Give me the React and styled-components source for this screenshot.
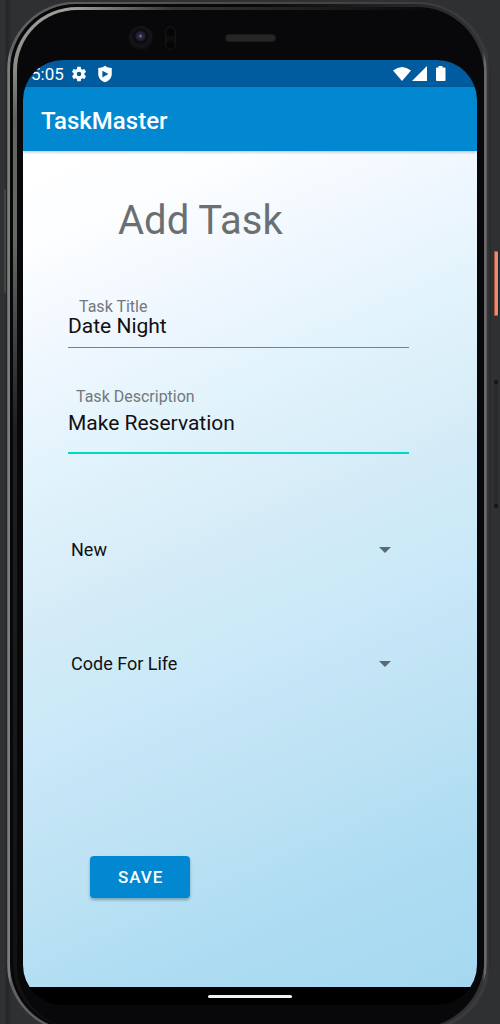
import React from "react";
import styled, { createGlobalStyle } from "styled-components";

const GlobalStyle = createGlobalStyle`
  * { box-sizing: border-box; }
  body { margin: 0; background: #2e3032; font-family: Roboto, "Liberation Sans", sans-serif; }
`;

const Stage = styled.div`
  position: relative;
  display: flex;
  min-height: 100vh;
  padding: 2px 9px 0 7px;
  overflow: clip;
  background: linear-gradient(90deg, #2e3032 0, #303233 4px, #252627 7px, #2e3032 12px);
`;

const Phone = styled.div`
  flex: 1;
  display: flex;
  margin-bottom: -8px;
  padding: 2px 4px 2px 3px;
  border-radius: 68px 74px 72px 68px;
  background: linear-gradient(90deg, #5c5d5f 0, #85878a 2px, #606164 4px, #4a4a4b 50%, #38393a calc(100% - 4px), #27282a 100%);
`;

const Rim = styled.div`
  flex: 1;
  display: flex;
  padding: 3px 3px 2px;
  border-radius: 66px 70px 70px 66px;
  background: linear-gradient(90deg, #080808 0, #080808 50%, #333334 calc(100% - 4px), #777778 calc(100% - 2px), #4a4a4b 100%);
`;

const Edge = styled.div`
  flex: 1;
  display: flex;
  padding: 3px 0 0 4px;
  border-radius: 64px 67px 68px 64px;
  background:
    linear-gradient(90deg, transparent 60px, rgba(8, 8, 10, 0.7) 160px, #08080a 90%),
    linear-gradient(180deg, #a0a09d 0, #8a8a87 60px, #62625f 110px, #686865 230px, #202020 420px, #111 100%);
`;

const Bezel = styled.div`
  flex: 1;
  display: flex;
  flex-direction: column;
  padding: 0 7px 23px 6px;
  border-radius: 60px 66px 68px 62px;
  background: #08080a;
`;

const Forehead = styled.div`
  display: flex;
  align-items: center;
  height: 50px;
  padding: 6px 0 0 106px;
`;

const Camera = styled.span`
  width: 24px;
  height: 24px;
  border-radius: 50%;
  background: radial-gradient(circle at 48% 42%, #8a8ca0 0, #28293c 2px, #20213a 4px, #0a0a0d 6px, #111113 8px, #161617 11px, #0e0e0f 12px);
`;

const Sensor = styled.span`
  width: 11px;
  height: 24px;
  margin-left: 12px;
  border: 1px solid #151516;
  border-radius: 6px;
  background:
    radial-gradient(circle at 50% 5px, #050506 0, #050506 3px, transparent 5px),
    radial-gradient(circle at 50% 18px, #050506 0, #050506 3px, #0d0d0e 5px);
`;

const Speaker = styled.span`
  width: 51px;
  height: 8px;
  margin-left: 49px;
  border: 1px solid #1a1a1b;
  border-radius: 4px;
  background: #262627;
`;

const Screen = styled.div`
  flex: 1;
  display: flex;
  flex-direction: column;
  border-radius: 40px;
  overflow: hidden;
  background: #000;
`;

const StatusBar = styled.div`
  display: flex;
  align-items: center;
  height: 27px;
  padding: 1px 31px 0 8px;
  background: #005b9f;
  color: #fff;
  font-size: 17px;
  line-height: 20px;
  svg { display: block; fill: currentColor; }
`;

const StatusGroup = styled.div`
  display: flex;
  align-items: center;
  gap: ${(p) => p.$gap}px;
  margin-left: ${(p) => (p.$end ? "auto" : "6px")};
`;

const AppBar = styled.header`
  position: relative;
  display: flex;
  align-items: center;
  height: 64px;
  padding: 3px 18px 0;
  background: #0288d1;
  color: #fff;
  font-size: 24px;
  font-weight: 500;
  line-height: 28px;
  box-shadow: 0 1px 3px rgba(0, 40, 70, 0.3);
`;

const Form = styled.form`
  flex: 1;
  display: flex;
  flex-direction: column;
  align-items: flex-start;
  padding: 46px 68px 88px 45px;
  background: linear-gradient(156deg, #fff 0, #fdfeff 9%, #edf6fe 23%, #e1f3fb 33%, #d4ebf7 47%, #cdeaf7 54%, #c8e7f9 60%, #bfe3f4 70%, #addcf2 86%, #a5d8f0 100%);
`;

const Heading = styled.h1`
  margin: 0 0 53px;
  padding-left: 50px;
  color: #6b6f72;
  font-size: 40px;
  font-weight: 400;
  line-height: 48px;
`;

const Field = styled.div`
  display: flex;
  flex-direction: column;
  width: 100%;
  margin-bottom: ${(p) => p.$after}px;
`;

const Label = styled.label`
  padding-left: ${(p) => p.$indent}px;
  color: #73787b;
  font-size: 16px;
  line-height: 18px;
`;

const TextBox = styled.input`
  width: 100%;
  height: ${(p) => (p.$active ? 48 : 32)}px;
  padding: 0 0 12px;
  border: 0;
  border-bottom: ${(p) => (p.$active ? "2px solid #00dac5" : "1px solid #7b8083")};
  outline: 0;
  border-radius: 0;
  background: transparent;
  color: #111;
  font: 400 21px/24px Roboto, "Liberation Sans", sans-serif;
`;

const Picker = styled.div`
  display: flex;
  align-items: center;
  width: 100%;
  margin-bottom: ${(p) => p.$after}px;
  padding: 0 18px 0 3px;
`;

const Select = styled.select`
  flex: 1;
  min-width: 0;
  height: 40px;
  padding: 0;
  border: 0;
  outline: 0;
  appearance: none;
  background: transparent;
  color: #111;
  font: 400 18px/24px Roboto, "Liberation Sans", sans-serif;
`;

const Caret = styled.svg`
  width: 12px;
  height: 6px;
  fill: #586b75;
  pointer-events: none;
`;

const SaveButton = styled.button`
  height: 42px;
  margin-left: 22px;
  padding: 0 27px 0 28px;
  border: 0;
  border-radius: 4px;
  background: #0288d1;
  color: #fff;
  font: 500 17px/20px Roboto, "Liberation Sans", sans-serif;
  letter-spacing: 1px;
  text-transform: uppercase;
  box-shadow: 0 2px 3px rgba(0, 40, 70, 0.35);
`;

const NavBar = styled.div`
  display: flex;
  justify-content: center;
  height: 18px;
  padding-top: 8px;
`;

const NavHandle = styled.span`
  width: 84px;
  height: 3px;
  border-radius: 2px;
  background: #f2f2f2;
`;

const SideButton = styled.span`
  position: absolute;
  top: ${(p) => p.$top}px;
  height: ${(p) => p.$height}px;
`;

const PowerButton = styled(SideButton)`
  right: 2px;
  width: 4px;
  border: 1px solid #a9553f;
  border-right: 0;
  background: #ef8a70;
  box-shadow: 1px 0 0 #10242e;
`;

const VolumeRocker = styled(SideButton)`
  right: 2px;
  width: 4px;
  border-top: 4px solid #161717;
  border-bottom: 4px solid #161717;
  border-radius: 2px;
  background: #292a2a;
`;

const LeftSeam = styled(SideButton)`
  left: 4px;
  width: 2px;
  border-radius: 1px;
  background: #414345;
`;

function Dropdown({ label, options, after }) {
  return (
    <Picker $after={after}>
      <Select aria-label={label}>
        {options.map((o) => <option key={o}>{o}</option>)}
      </Select>
      <Caret viewBox="0 0 12 6" aria-hidden="true"><path d="M0 0h12L6 6z" /></Caret>
    </Picker>
  );
}

export default function App() {
  return (
    <>
      <GlobalStyle />
      <Stage>
        <Phone>
          <Rim>
            <Edge>
              <Bezel>
                <Forehead><Camera /><Sensor /><Speaker /></Forehead>
                <Screen>
                  <StatusBar>
                    <span>5:05</span>
                    <StatusGroup $gap={8}>
                      <svg width="18" height="18" viewBox="0 0 24 24" aria-hidden="true">
                        <path d="M19.14 12.94c.04-.3.06-.61.06-.94 0-.32-.02-.64-.07-.94l2.03-1.58a.49.49 0 0 0 .12-.61l-1.92-3.32a.49.49 0 0 0-.59-.22l-2.39.96c-.5-.38-1.03-.7-1.62-.94l-.36-2.54a.48.48 0 0 0-.48-.41h-3.84c-.24 0-.43.17-.47.41l-.36 2.54c-.59.24-1.13.57-1.62.94l-2.39-.96a.48.48 0 0 0-.59.22L2.74 8.87a.48.48 0 0 0 .12.61l2.03 1.58c-.05.3-.09.63-.09.94s.02.64.07.94l-2.03 1.58a.49.49 0 0 0-.12.61l1.92 3.32c.12.22.37.29.59.22l2.39-.96c.5.38 1.03.7 1.62.94l.36 2.54c.05.24.24.41.48.41h3.84c.24 0 .44-.17.47-.41l.36-2.54c.59-.24 1.13-.56 1.62-.94l2.39.96c.22.08.47 0 .59-.22l1.92-3.32a.48.48 0 0 0-.12-.61zM12 15a3 3 0 1 1 0-6 3 3 0 0 1 0 6z" />
                      </svg>
                      <svg width="18" height="18" viewBox="0 0 24 24" aria-hidden="true">
                        <path fillRule="evenodd" d="M12 1C9.500 3 6 4 3 4v8c0 5.500 4 9.500 9 11 5-1.500 9-5.500 9-11V4c-3 0-6.500-1-9-3zM8.500 7.500v9l8-4.500z" />
                      </svg>
                    </StatusGroup>
                    <StatusGroup $gap={1} $end>
                      <svg width="18" height="16" viewBox="0 0 18 16" aria-hidden="true">
                        <path d="M0 4.500Q9-2.500 18 4.500L9 15z" />
                      </svg>
                      <svg width="15" height="16" viewBox="0 0 15 16" aria-hidden="true">
                        <path d="M15 0v15H0z" />
                      </svg>
                      <svg width="18" height="16" viewBox="0 0 18 16" aria-hidden="true">
                        <path d="M10.500 0h4v1.500H16.500q1 0 1 1V14q0 1-1 1H9q-1 0-1-1V2.500q0-1 1-1h1.500z" />
                      </svg>
                    </StatusGroup>
                  </StatusBar>
                  <AppBar>TaskMaster</AppBar>
                  <Form onSubmit={(e) => e.preventDefault()}>
                    <Heading>Add Task</Heading>
                    <Field $after={40}>
                      <Label htmlFor="title" $indent={11}>Task Title</Label>
                      <TextBox id="title" defaultValue="Date Night" />
                    </Field>
                    <Field $after={76}>
                      <Label htmlFor="description" $indent={8}>Task Description</Label>
                      <TextBox id="description" $active defaultValue="Make Reservation" />
                    </Field>
                    <Dropdown label="Status" options={["New", "Assigned", "In Progress", "Complete"]} after={74} />
                    <Dropdown label="Team" options={["Code For Life"]} after={172} />
                    <SaveButton type="submit">Save</SaveButton>
                  </Form>
                  <NavBar><NavHandle /></NavBar>
                </Screen>
              </Bezel>
            </Edge>
          </Rim>
        </Phone>
        <LeftSeam $top={189} $height={104} />
        <PowerButton $top={251} $height={65} />
        <VolumeRocker $top={380} $height={128} />
      </Stage>
    </>
  );
}
